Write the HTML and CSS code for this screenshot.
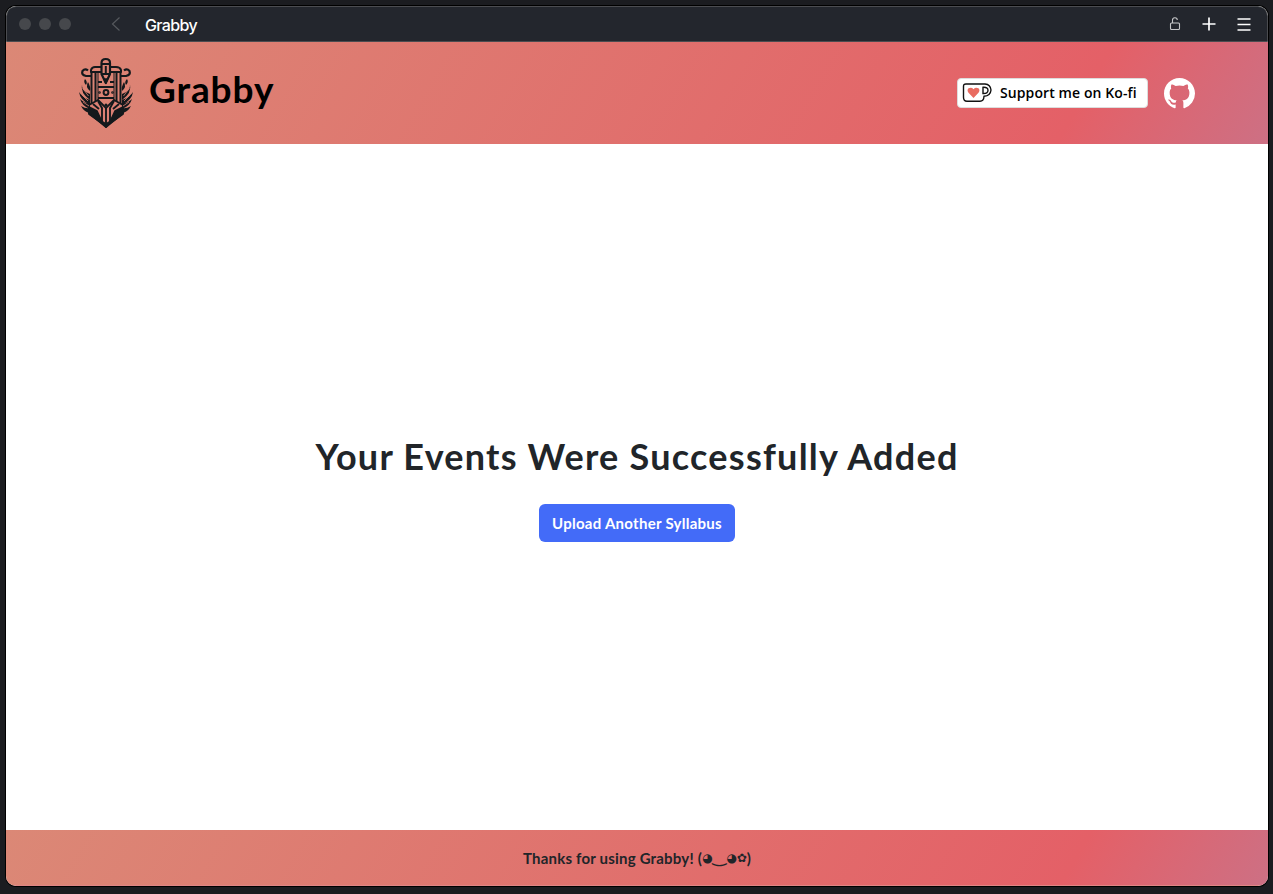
FILE: index.html
```html
<!DOCTYPE html>
<html lang="en">
<head>
<meta charset="utf-8">
<title>Grabby</title>
<link rel="stylesheet" href="styles.css">
</head>
<body>
<div class="window">
  <div class="titlebar">
    <div class="lights"><i></i><i></i><i></i></div>
    <svg class="back" width="10" height="16" viewBox="0 0 10 16"><path d="M8.500 1.500 1.500 8l7 6.500" fill="none" stroke="#55585d" stroke-width="1.2"/></svg>
    <span class="tab-title">Grabby</span>
    <div class="tools">
      <svg width="12" height="16" viewBox="0 0 12 16" fill="none" stroke="#c4c5c7" stroke-width="1.1"><rect x="1.500" y="7" width="9" height="6.500" rx="1"/><path d="M3.500 7V4.300a2.400 2.400 0 0 1 4.800-.3"/></svg>
      <svg width="14" height="14" viewBox="0 0 14 14"><path d="M7 .5v13M.5 7h13" stroke="#fff" stroke-width="1.7"/></svg>
      <svg width="14" height="14" viewBox="0 0 14 14"><path d="M.5 2h13M.5 7.500h13M.5 13h13" stroke="#fff" stroke-width="1.600"/></svg>
    </div>
  </div>
  <header class="header">
    <svg class="logo" width="54" height="72" viewBox="0 0 54 72" fill="none" stroke="#14191c" stroke-width="1.7" stroke-linejoin="round">
      <path d="M22 10H16q-3 0-4 3v2h10M31 10h6q4 0 5 3v2H31" stroke-width="2"/>
      <path d="M12.500 14v33M16.500 15v29M41.500 14v33M37.500 15v29" stroke-width="2"/>
      <path d="M19 15v28M35 15v28" stroke-width="1"/>
      <path d="M12 19H7q-5-1-3.500-5Q6 11 9 13.500M42 19h5q5-1 3.500-5Q48 11 45 13.500" stroke-width="2.200"/>
      <path d="M22.500 17V6q0-4 4.300-4T31 6v11l-4.200 9z" stroke-width="2.200"/>
      <path d="M23 7h8M23 17h8M26.800 9v7" stroke-width="2"/>
      <path d="m25 22 1.800 4 1.800-4z" fill="#14191c"/>
      <path d="M19 25h4M31 25h4M19 30h16M19 41h16" stroke-width="1.900"/>
      <circle cx="27" cy="35.500" r="2.400" stroke-width="2"/>
      <circle cx="20.500" cy="35.500" r=".5"/><circle cx="33.500" cy="35.500" r=".5"/>
      <path d="m10 48 9-5 8 8 8-8 9 5v8L27 70 10 56z" fill="#dc8074" stroke-width="1.800"/>
      <path d="m10 50 8 4 6 13L10 57zM44 50l-8 4-6 13 14-10z" fill="#14191c"/>
      <path d="m19 44 4 7v14M35 44l-4 7v14M27 51v17M14 47l6 5M40 47l-6 5" stroke-width="1.900"/>
      <path d="m22 64 5 6 5-6-5 3z" fill="#14191c"/>
      <circle cx="27" cy="48" r=".7"/>
      <g id="leaves" fill="#14191c" stroke="none">
        <path d="M6 22q3 3 1 6-3-3-1-6M9 25q3 5 2 9-5-4-2-9M3 27q-1 7 8 10v6Q1 36 3 27M0 35q3 5 11 8v5Q1 43 0 35M1 42q4 4 10 5v5Q3 49 1 42M2 49q5 3 9 2v5Q5 55 2 49"/>
      </g>
      <use href="#leaves" transform="matrix(-1 0 0 1 54 0)"/>
      <path d="m3.500 31 6 8M3 38l6 6M4 45l6 4M50.500 31l-6 8M51 38l-6 6M50 45l-6 4" stroke="#dc8074" stroke-width=".8"/>
    </svg>
    <span class="brand">Grabby</span>
    <a class="kofi">
      <svg width="30" height="22" viewBox="0 0 30 22" fill="none" stroke="#111" stroke-width="1.400"><path d="M4 2h19q5.500.5 6 6-.5 5.800-7 6.300-.2 5-4 5H5q-3.500 0-3.500-4V4.500Q1.500 2 4 2z"/><path d="M21 5.300v6.200q5 .2 5-3.200t-5-3z"/><path d="m11.500 16-5-5.200Q4.600 8 6.500 6.300q3-1.500 5 .9 2-2.400 5-.9 1.900 1.700 0 4.500z" fill="#e96b60" stroke="none"/></svg>
      <span>Support me on Ko-fi</span>
    </a>
    <svg class="github" width="31" height="31" viewBox="0 0 16 16" fill="#fff"><path d="M8 0C3.580 0 0 3.580 0 8c0 3.540 2.290 6.530 5.470 7.590.4.070.55-.17.55-.38 0-.19-.01-.82-.01-1.490-2.010.37-2.530-.49-2.690-.94-.09-.23-.48-.94-.82-1.130-.28-.15-.68-.52-.01-.53.63-.01 1.080.58 1.230.82.720 1.210 1.870.87 2.330.66.070-.52.280-.87.510-1.070-1.780-.2-3.640-.89-3.640-3.950 0-.87.310-1.590.82-2.150-.08-.2-.36-1.020.08-2.120 0 0 .67-.21 2.200.82.640-.18 1.320-.27 2-.27s1.360.09 2 .27c1.530-1.040 2.200-.82 2.200-.82.440 1.100.160 1.920.08 2.120.51.560.82 1.270.82 2.150 0 3.070-1.870 3.750-3.650 3.950.290.250.540.730.540 1.480 0 1.070-.01 1.930-.01 2.200 0 .21.150.46.550.38A8.010 8.010 0 0 0 16 8c0-4.420-3.580-8-8-8z"/></svg>
  </header>
  <main class="content">
    <h1 class="headline">Your Events Were Successfully Added</h1>
    <button class="upload">Upload Another Syllabus</button>
  </main>
  <footer class="footer"><span>Thanks for using Grabby! (</span><span class="face">◕<b>‿</b>◕✿</span><span>)</span></footer>
</div>
</body>
</html>
```

FILE: styles.css
```css
* { box-sizing: border-box; }
body {
  margin: 0;
  height: 894px;
  padding: 6px 5px 8px 6px;
  background: #1b1c20;
  overflow: hidden;
  font-family: Lato, "Open Sans", sans-serif;
  color: #212529;
}
.window {
  height: 880px;
  display: flex;
  flex-direction: column;
  border-radius: 10px;
  overflow: hidden;
  background: #fff;
  box-shadow: 0 0 0 1px #000;
}
.titlebar {
  height: 36px;
  flex: none;
  display: flex;
  align-items: center;
  padding: 0 17px 0 12px;
  background: #23262d;
  border: 1px solid #4b4c50;
  border-radius: 10px 10px 0 0;
}
.lights { display: flex; gap: 8px; }
.lights i { width: 12px; height: 12px; border-radius: 50%; background: #46484c; }
.back { margin-left: 40px; }
.tab-title {
  margin: 1px 0 0 24px;
  font: 500 16px/20px Inter, sans-serif;
  letter-spacing: -0.65px;
  color: #fff;
}
.tools { margin-left: auto; display: flex; align-items: center; gap: 21px; margin-right: -1px; }
.tools svg:nth-child(2) { margin-right: 0; }
.header, .footer {
  flex: none;
  display: flex;
  align-items: center;
  background: linear-gradient(120deg, #db8876 0%, #e46067 84%, #cd7084 100%);
}
.header { height: 102px; padding: 0 73px; }
.brand {
  margin: -8px 0 0 16px;
  font-size: 37px;
  line-height: 48px;
  font-weight: 700;
  letter-spacing: 0.9px;
  color: #000;
}
.kofi {
  margin-left: auto;
  width: 191px;
  height: 30px;
  display: flex;
  align-items: center;
  gap: 8px;
  padding-left: 4px;
  background: #fff;
  border: 1px solid #ddd;
  border-radius: 4px;
  color: #000;
  font: 600 14px/20px "Open Sans", sans-serif;
  letter-spacing: 0.1px;
  white-space: nowrap;
}
.github { margin-left: 16px; }
.content {
  flex: 1;
  display: flex;
  flex-direction: column;
  align-items: center;
  justify-content: center;
}
.headline {
  margin: 0 0 24px;
  font-size: 36px;
  line-height: 48px;
  font-weight: 700;
  letter-spacing: 1.25px;
  white-space: nowrap;
}
.upload {
  width: 196px;
  height: 38px;
  padding: 0;
  border: 0;
  border-radius: 6px;
  background: #436bf8;
  color: #fff;
  font: 700 15px/22px Lato, sans-serif;
  letter-spacing: 0.27px;
  white-space: nowrap;
}
.footer {
  height: 56px;
  justify-content: center;
  border-bottom: 1px solid #df8585;
  font-size: 15px;
  font-weight: 700;
  letter-spacing: 0.2px;
  white-space: nowrap;
}
.face { font: 12px "DejaVu Sans", sans-serif; letter-spacing: 0; }
.face b { font-weight: 400; font-size: 17px; line-height: 12px; }
```
